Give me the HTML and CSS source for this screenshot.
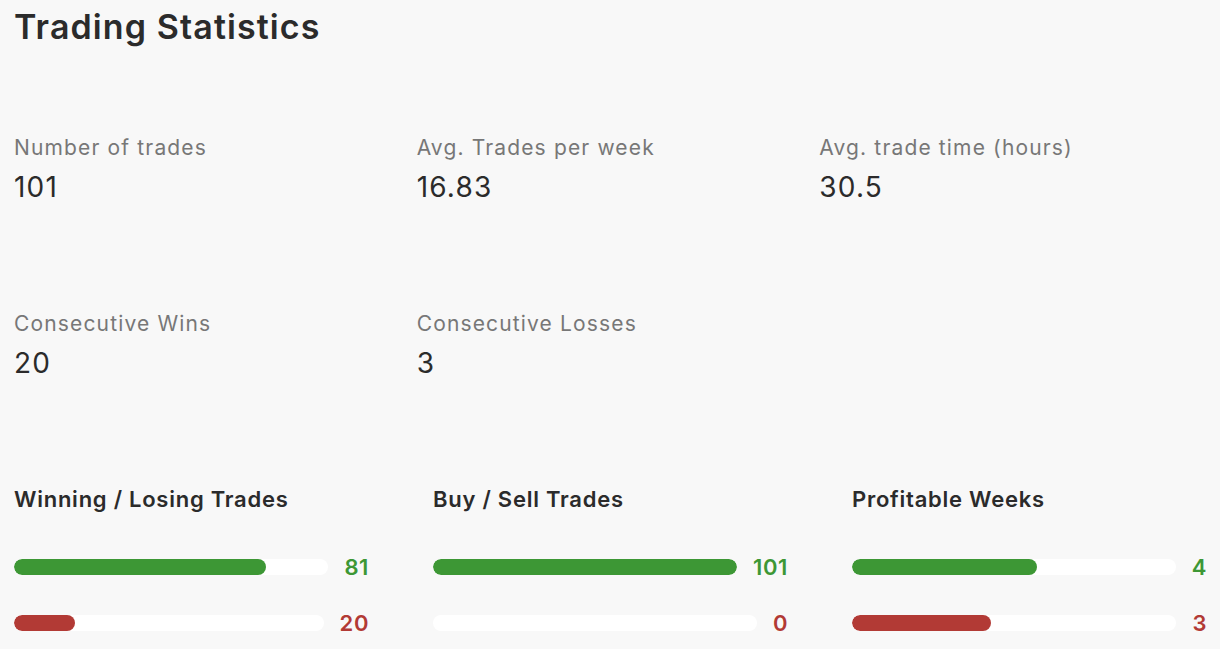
FILE: index.html
```html
<!DOCTYPE html>
<html>
<head>
<meta charset="utf-8">
<link rel="stylesheet" href="styles.css">
</head>
<body>
<main class="page">
  <h1 class="title">Trading Statistics</h1>
  <section class="stats">
    <div class="stat"><div class="stat-label">Number of trades</div><div class="stat-value">101</div></div>
    <div class="stat"><div class="stat-label">Avg. Trades per week</div><div class="stat-value">16.83</div></div>
    <div class="stat"><div class="stat-label">Avg. trade time (hours)</div><div class="stat-value">30.5</div></div>
    <div class="stat"><div class="stat-label">Consecutive Wins</div><div class="stat-value">20</div></div>
    <div class="stat"><div class="stat-label">Consecutive Losses</div><div class="stat-value">3</div></div>
  </section>
  <section class="charts">
    <div class="chart">
      <h2 class="chart-title">Winning / Losing Trades</h2>
      <div class="bar-row"><div class="track"><div class="fill win" style="width:80.2%"></div></div><span class="num win-text">81</span></div>
      <div class="bar-row"><div class="track"><div class="fill loss" style="width:19.8%"></div></div><span class="num loss-text">20</span></div>
    </div>
    <div class="chart">
      <h2 class="chart-title">Buy / Sell Trades</h2>
      <div class="bar-row"><div class="track"><div class="fill win" style="width:100%"></div></div><span class="num win-text">101</span></div>
      <div class="bar-row"><div class="track"><div class="fill loss" style="width:0%"></div></div><span class="num loss-text">0</span></div>
    </div>
    <div class="chart">
      <h2 class="chart-title">Profitable Weeks</h2>
      <div class="bar-row"><div class="track"><div class="fill win" style="width:57.1%"></div></div><span class="num win-text">4</span></div>
      <div class="bar-row"><div class="track"><div class="fill loss" style="width:42.9%"></div></div><span class="num loss-text">3</span></div>
    </div>
  </section>
</main>
</body>
</html>
```
FILE: styles.css
```css
html, body {
  margin: 0;
  padding: 0;
  background: #f8f8f8;
}
body {
  font-family: Inter, "Noto Sans", sans-serif;
  color: #2b2b2b;
}
.page {
  padding: 7px 14px 0 14px;
}
.title {
  margin: 0;
  font-size: 34px;
  line-height: 40px;
  font-weight: 600;
  letter-spacing: 1.1px;
  color: #2b2b2b;
}
.stats {
  margin-top: 87px;
  display: grid;
  grid-template-columns: repeat(3, 1fr);
  column-gap: 16px;
  row-gap: 106px;
}
.stat-label {
  font-size: 21px;
  line-height: 28px;
  letter-spacing: 1.15px;
  color: #777777;
}
.stat-value {
  margin-top: 8px;
  font-size: 28px;
  line-height: 34px;
  letter-spacing: 1.2px;
  color: #2b2b2b;
}
.charts {
  margin-top: 105px;
  display: grid;
  grid-template-columns: repeat(3, 355px);
  column-gap: 64px;
}
.chart-title {
  margin: 0 0 40px 0;
  font-size: 22px;
  line-height: 28px;
  font-weight: 600;
  letter-spacing: 0.75px;
  color: #2b2b2b;
}
.bar-row {
  display: flex;
  align-items: center;
  gap: 16px;
  height: 28px;
  margin-bottom: 28px;
}
.track {
  flex: 1;
  height: 16px;
  border-radius: 8px;
  background: #ffffff;
  overflow: hidden;
}
.fill {
  height: 100%;
  border-radius: 8px;
}
.fill.win { background: #3d9735; }
.fill.loss { background: #b23a35; }
.num {
  font-size: 22px;
  font-weight: 600;
  letter-spacing: 0.6px;
}
.win-text { color: #3d9735; }
.loss-text { color: #b23a35; }
```
